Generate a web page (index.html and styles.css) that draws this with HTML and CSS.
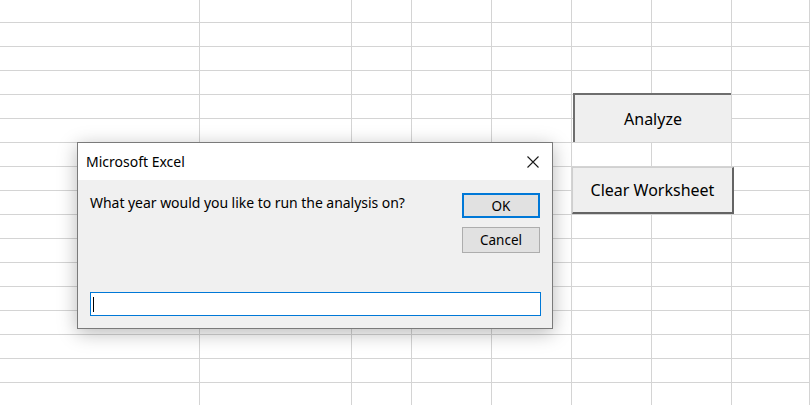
FILE: index.html
```html
<!DOCTYPE html>
<html>
<head>
<meta charset="utf-8">
<link rel="stylesheet" href="styles.css">
</head>
<body>
<div class="sheet">
  <div class="grid" id="grid"></div>
  <button class="sheet-btn btn-analyze">Analyze</button>
  <button class="sheet-btn btn-clear">Clear Worksheet</button>

  <div class="dialog">
    <div class="titlebar">
      <span class="title">Microsoft Excel</span>
      <svg class="close" width="12" height="12" viewBox="0 0 12 12">
        <path d="M0.5 0.5 L11.5 11.5 M11.5 0.5 L0.5 11.5" stroke="#1a1a1a" stroke-width="1.1" fill="none"/>
      </svg>
    </div>
    <div class="dbody">
      <div class="top-row">
        <p class="msg">What year would you like to run the analysis on?</p>
        <div class="actions">
          <div class="dbtn ok">OK</div>
          <div class="dbtn">Cancel</div>
        </div>
      </div>
      <div class="input"><span class="caret"></span></div>
    </div>
  </div>
</div>
<script>
  var g = document.getElementById('grid');
  var html = '';
  for (var r = 0; r < 17; r++) {
    for (var c = 0; c < 8; c++) html += '<div class="cell"></div>';
  }
  g.innerHTML = html;
</script>
</body>
</html>
```

FILE: styles.css
```css
html, body {
  margin: 0;
  padding: 0;
  background: #ffffff;
  overflow: hidden;
}
.sheet {
  position: relative;
  width: 810px;
  height: 405px;
  overflow: hidden;
}
.grid {
  display: grid;
  grid-template-columns: 200px 152px 60px 80px 80px 80px 80px 1fr;
  grid-template-rows: 23px;
  grid-auto-rows: 24px;
}
.cell {
  border-right: 1px solid #d4d4d4;
  border-bottom: 1px solid #d4d4d4;
}
.sheet-btn {
  position: absolute;
  margin: 0;
  padding: 0;
  background: #efefef;
  font-family: "Noto Sans", "Open Sans", sans-serif;
  font-size: 16px;
  color: #000;
  text-align: center;
}
.btn-analyze {
  left: 573px;
  top: 93px;
  width: 158px;
  height: 49px;
  border: none;
  border-top: 2px solid #6e6e6e;
  border-left: 2px solid #6e6e6e;
}
.btn-clear {
  left: 572px;
  top: 167px;
  width: 162px;
  height: 47px;
  border: none;
  border-top: 1px solid #d0d0d0;
  border-left: 1px solid #d0d0d0;
  border-right: 2px solid #646464;
  border-bottom: 2px solid #646464;
}
.dialog {
  position: absolute;
  left: 77px;
  top: 142px;
  width: 474px;
  height: 185px;
  border: 1px solid #7a7a7a;
  background: #f0f0f0;
  box-shadow: 0 4px 18px rgba(0, 0, 0, 0.28);
  display: flex;
  flex-direction: column;
  font-family: "Noto Sans", "Open Sans", sans-serif;
  color: #000;
}
.titlebar {
  height: 37px;
  background: #ffffff;
  display: flex;
  align-items: center;
  justify-content: space-between;
  padding: 0 13px 0 8px;
}
.title {
  font-size: 14px;
}
.close {
  display: block;
}
.dbody {
  flex: 1;
  display: flex;
  flex-direction: column;
  padding: 13px 11px 12px 11px;
}
.top-row {
  display: flex;
  justify-content: space-between;
  align-items: flex-start;
  flex: 1;
}
.msg {
  margin: 0;
  padding: 0 0 0 1px;
  font-size: 14px;
  letter-spacing: -0.04px;
  line-height: 20px;
}
.actions {
  display: flex;
  flex-direction: column;
  gap: 9px;
  margin-right: 1px;
}
.dbtn {
  box-sizing: border-box;
  width: 78px;
  height: 26px;
  border: 1px solid #adadad;
  background: #e1e1e1;
  font-size: 13.5px;
  display: flex;
  align-items: center;
  justify-content: center;
}
.dbtn.ok {
  height: 25px;
  border: 2px solid #0078d7;
}
.input {
  box-sizing: border-box;
  height: 24px;
  background: #fff;
  border: 1px solid #0078d7;
  margin-left: 1px;
  display: flex;
  align-items: center;
  padding-left: 2px;
}
.caret {
  width: 1px;
  height: 15px;
  background: #000;
}
```
